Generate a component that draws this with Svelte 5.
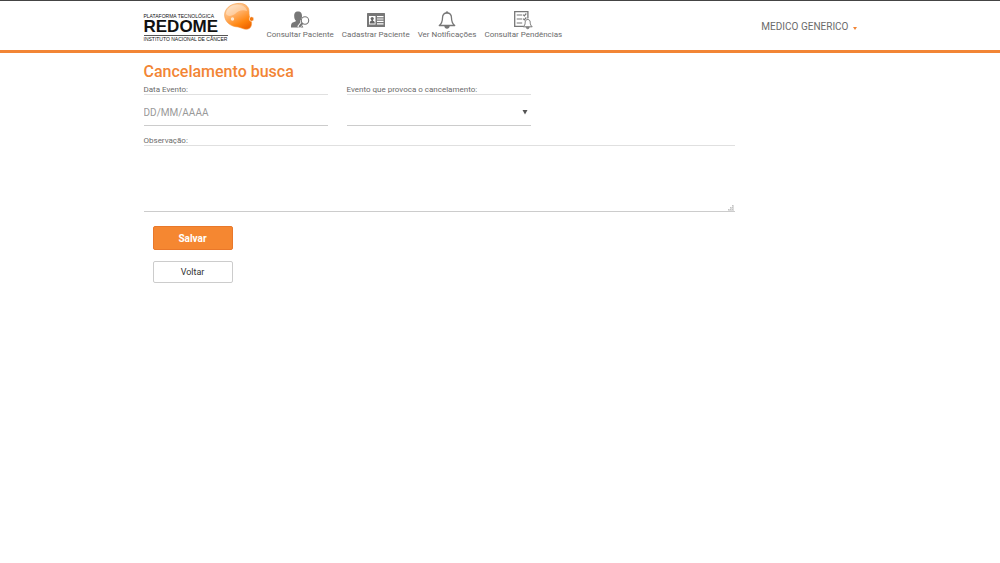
<script lang="ts">
    let dataEvento = $state('');
    let evento = $state('');
    let observacao = $state('');

    const menu = [
        { icon: 'paciente', label: 'Consultar Paciente' },
        { icon: 'cadastro', label: 'Cadastrar Paciente' },
        { icon: 'sino', label: 'Ver Notificações' },
        { icon: 'pendencias', label: 'Consultar Pendências' }
    ];
</script>

<header class="topo">
    <div class="container barra">
        <a class="logo" href="#inicio" aria-label="Redome">
            <span class="logo-texto">
                <span class="logo-linha">PLATAFORMA TECNOLÓGICA</span>
                <strong>REDOME</strong>
                <span class="logo-linha instituto">INSTITUTO NACIONAL DE CÂNCER</span>
            </span>
            <svg class="gota" viewBox="0 0 32 30" width="32" height="30" aria-hidden="true">
                <defs>
                    <linearGradient id="gota-cor" x1="0.2" y1="0" x2="0.75" y2="1">
                        <stop offset="0" stop-color="#ffd9b0" />
                        <stop offset="0.4" stop-color="#ffb066" />
                        <stop offset="0.75" stop-color="#ff850f" />
                        <stop offset="1" stop-color="#ee6500" />
                    </linearGradient>
                </defs>
                <path d="M13 1.500C20 .5 25 4 25 9.500c0 3.500.2 4.500 1.600 7.500 2 4.500 1 9-2.600 10-4 1-6-1.200-10-2C6.500 24.500 .6 20 .6 13 .6 7 6 2.200 13 1.500z" fill="url(#gota-cor)" stroke="#f79a45" stroke-width="0.600" />
                <path d="M2 12C2.500 6 8 2.700 13 2.700c6 0 10 3 10 6.300-5-2-9 0-12 3-3 2-7 3-9 0z" fill="#fff" opacity="0.35" />
                <circle cx="8.500" cy="17" r="1.700" fill="#ffe8d0" />
                <circle cx="27.600" cy="17" r="2.300" fill="#f27a12" stroke="#fff" stroke-width="0.600" />
            </svg>
        </a>

        <nav class="menu">
            {#each menu as item}
                <a href="#{item.icon}">
                    {#if item.icon === 'paciente'}
                        <svg viewBox="0 0 20 20" width="20" height="20" aria-hidden="true">
                            <path d="M8 1.500c3 0 4 2 4 4.500 0 2-.7 3.500-1.700 4.500-.2 1 .1 1.800 1 2.300l2 4.700H1c0-3.500.5-4.500 2.500-5.200C5.500 11.600 6 11.500 5.800 10.500 4.700 9.500 4.200 8 4.200 6 4.200 3.500 5 1.500 8 1.500z" fill="#777" />
                            <path d="M12.500 12.600l-3.900 4.700" stroke="#fff" stroke-width="3.600" />
                            <circle cx="15" cy="10.500" r="3.700" fill="#fff" stroke="#777" stroke-width="1.100" />
                            <path d="M12.500 13l-3.300 4" stroke="#777" stroke-width="2" />
                        </svg>
                    {:else if item.icon === 'cadastro'}
                        <svg viewBox="0 0 20 20" width="20" height="20" aria-hidden="true">
                            <rect x="1" y="3" width="18" height="14" rx="0.500" fill="#777" />
                            <path d="M3 6h6.500v8.500H3zM11 6h6.500v1.200H11zM11 8.400h6.500v1.200H11zM11 10.800h6.500V12H11zM11 13.200h6.500v1.200H11z" fill="#fff" />
                            <circle cx="6.200" cy="8.600" r="1.600" fill="#666" />
                            <path d="M3.700 13.500c0-2 .7-2.500 1.800-2.800V9h1.500v1.700c1.200.3 1.800.8 1.800 2.800z" fill="#666" />
                        </svg>
                    {:else if item.icon === 'sino'}
                        <svg viewBox="0 0 20 20" width="20" height="20" aria-hidden="true">
                            <path d="M10 3c-3 0-4.500 2.200-4.500 5 0 4-.8 5.500-3.200 7.500h15.400c-2.400-2-3.200-3.500-3.200-7.500 0-2.800-1.500-5-4.500-5z" fill="none" stroke="#777" stroke-width="1.300" stroke-linejoin="round" />
                            <path d="M8.600 3a1.400 1.800 0 0 1 2.800 0z" fill="#777" />
                            <path d="M7.200 15.600h5.600c-.2 2.200-1.300 3.200-2.800 3.200s-2.600-1-2.800-3.200z" fill="#777" />
                        </svg>
                    {:else}
                        <svg viewBox="0 0 20 20" width="20" height="20" aria-hidden="true">
                            <path d="M10.500 16.400H1.700V1.700h13.200v6.500" fill="none" stroke="#777" stroke-width="1.300" />
                            <path d="M3.700 5h5.500M3.700 9h5.500M3.700 13h5.500M10.200 4.700l1.100 1.100 2-2.300M10.200 8.700l1.100 1.100 2-2.300" fill="none" stroke="#777" stroke-width="1.200" />
                            <path d="M14.700 9.500c-1.600 0-2.500 1.200-2.500 2.800 0 2-.7 3.400-2 4.500h9c-1.300-1.100-2-2.500-2-4.500 0-1.600-.9-2.800-2.500-2.800z" fill="#fff" stroke="#777" stroke-width="1" />
                            <path d="M14.700 8.400v1.200M13.200 17.200h3c0 1-.7 1.600-1.500 1.600s-1.500-.6-1.500-1.600z" fill="#777" stroke="#777" stroke-width="0.600" />
                        </svg>
                    {/if}
                    <span>{item.label}</span>
                </a>
            {/each}
        </nav>

        <button class="usuario" type="button">
            MEDICO GENERICO
            <span class="seta"></span>
        </button>
    </div>
</header>

<main class="container">
    <h1>Cancelamento busca</h1>

    <form onsubmit={(e) => e.preventDefault()}>
        <div class="campos">
            <div class="campo">
                <label for="dataEvento">Data Evento:</label>
                <input id="dataEvento" type="text" placeholder="DD/MM/AAAA" bind:value={dataEvento} />
            </div>

            <div class="campo">
                <label for="evento">Evento que provoca o cancelamento:</label>
                <div class="selecao">
                    <select id="evento" bind:value={evento}>
                        <option value=""></option>
                    </select>
                    <svg viewBox="0 0 6 5" width="6" height="5" aria-hidden="true">
                        <path d="M0.500 0h5L3 4.500z" fill="#555" />
                    </svg>
                </div>
            </div>

            <div class="campo inteiro">
                <label for="observacao">Observação:</label>
                <div class="area">
                    <textarea id="observacao" bind:value={observacao}></textarea>
                    <svg viewBox="0 0 6 6" width="6" height="6" aria-hidden="true">
                        <path d="M4 0h2v6H0V4h2V2h2z" fill="#ddd" />
                        <path d="M4 0h1v1H4zM2 2h1v1H2zM4 2h1v1H4zM0 4h1v1H0zM2 4h1v1H2zM4 4h1v1H4z" fill="#c4c4c4" />
                    </svg>
                </div>
            </div>
        </div>

        <div class="botoes">
            <button class="salvar" type="submit">Salvar</button>
            <button class="voltar" type="button">Voltar</button>
        </div>
    </form>
</main>

<style>
    :global(body) {
        background: #fff;
        color: #6b6b6b;
        font-family: Roboto, "Liberation Sans", sans-serif;
    }

    * {
        box-sizing: border-box;
    }

    .container {
        width: calc(100% - 32px);
        max-width: 713px;
        margin: 0 auto;
    }

    .topo {
        border-top: 1px solid #444;
        border-bottom: 3px solid #f28535;
    }

    .barra {
        display: flex;
        align-items: flex-start;
        min-height: 49px;
    }

    .logo {
        display: flex;
        color: #111;
        text-decoration: none;
        font-family: "Liberation Sans", Arial, sans-serif;
    }

    .logo-texto {
        display: flex;
        flex-direction: column;
        width: 84px;
        padding-top: 12px;
        white-space: nowrap;
    }

    .logo-linha {
        font-size: 5px;
        line-height: 6px;
    }

    .logo strong {
        font-size: 17px;
        line-height: 16px;
    }

    .instituto {
        border-top: 1px solid #555;
    }

    .gota {
        margin: 1px 0 0 -4px;
    }

    .menu {
        display: flex;
        gap: 8px;
        padding-top: 9px;
        margin-left: 11px;
    }

    .menu a {
        display: flex;
        flex-direction: column;
        align-items: center;
        color: #6b6b6b;
        font-size: 8px;
        line-height: 10px;
        text-decoration: none;
        white-space: nowrap;
    }

    .usuario {
        display: flex;
        align-items: center;
        gap: 4px;
        margin: 20px 0 0 auto;
        padding: 0;
        border: 0;
        background: none;
        color: #6b6b6b;
        font-family: inherit;
        font-size: 10px;
        line-height: 12px;
    }

    .seta {
        margin-top: 2px;
        border: 2px solid transparent;
        border-top: 3px solid #f28535;
        border-bottom: 0;
    }

    h1 {
        margin: 10px 0 4px;
        color: #f28535;
        font-size: 16px;
        font-weight: 500;
        line-height: 18px;
    }

    .campos {
        display: grid;
        grid-template-columns: 184fr 184fr 307fr;
        column-gap: 19px;
        row-gap: 10px;
    }

    .campo {
        min-width: 0;
    }

    .inteiro {
        grid-column: 1 / -1;
        width: 83%;
    }

    label {
        display: block;
        border-bottom: 1px solid #e0e0e0;
        font-size: 8px;
        line-height: 9px;
    }

    input,
    select,
    textarea {
        display: block;
        width: 100%;
        height: 31px;
        padding: 5px 0 0;
        border: 0;
        border-bottom: 1px solid #ccc;
        border-radius: 0;
        outline: 0;
        background: transparent;
        color: #666;
        font-family: inherit;
        font-size: 10px;
    }

    input::placeholder {
        color: #999;
    }

    select {
        appearance: none;
    }

    textarea {
        height: 66px;
        resize: none;
    }

    .selecao,
    .area {
        position: relative;
    }

    .selecao svg {
        position: absolute;
        top: 15px;
        right: 3px;
        pointer-events: none;
    }

    .area svg {
        position: absolute;
        right: 1px;
        bottom: 1px;
        pointer-events: none;
    }

    .botoes {
        display: flex;
        flex-direction: column;
        align-items: flex-start;
        gap: 11px;
        padding: 14px 9px;
    }

    .botoes button {
        width: 80px;
        height: 24px;
        padding: 0;
        border: 1px solid #e9782a;
        border-radius: 2px;
        background: #f58731;
        color: #fff;
        font-family: inherit;
        font-size: 10px;
        font-weight: 700;
    }

    .botoes .voltar {
        height: 22px;
        border-color: #ccc;
        background: #fff;
        color: #333;
        font-size: 9px;
        font-weight: 400;
    }
</style>
